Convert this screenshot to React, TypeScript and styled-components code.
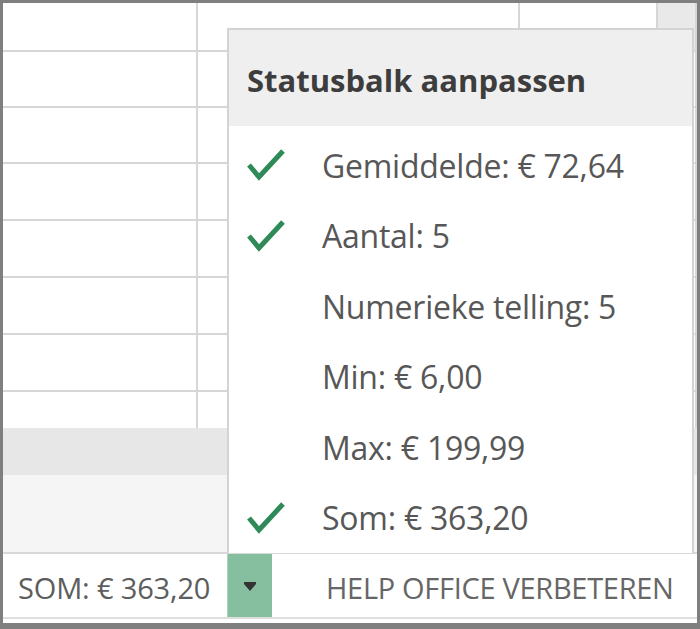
import React from 'react';
import styled, { createGlobalStyle } from 'styled-components';

const GlobalStyle = createGlobalStyle`
  html, body {
    margin: 0;
    padding: 0;
    background: #ffffff;
  }
  * {
    box-sizing: border-box;
  }
`;

const Frame = styled.div`
  position: relative;
  width: 700px;
  height: 629px;
  display: flex;
  flex-direction: column;
  border: 3px solid #7f7f7f;
  border-bottom-width: 6px;
  background: #ffffff;
  font-family: "Open Sans", "Noto Sans", sans-serif;
  overflow: hidden;
`;

const Sheet = styled.div`
  flex: 1;
  display: flex;
  flex-direction: column;
`;

const Grid = styled.div`
  display: flex;
  flex-direction: column;
`;

const Row = styled.div<{ $h: number; $last?: boolean }>`
  display: flex;
  height: ${p => p.$h}px;
  border-bottom: ${p => (p.$last ? 'none' : '2px solid #d6d6d6')};
`;

const Cell = styled.div<{ $w: number; $tone?: string }>`
  width: ${p => p.$w}px;
  flex: ${p => (p.$w ? '0 0 auto' : '1')};
  background: ${p => p.$tone || '#ffffff'};
  border-right: 2px solid #d6d6d6;
`;

const Band = styled.div`
  height: 47px;
  background: #e7e7e7;
`;

const Lower = styled.div`
  flex: 1;
  background: #f5f5f5;
`;

const StatusBar = styled.div`
  height: 67px;
  display: flex;
  align-items: stretch;
  border-top: 2px solid #d8d8d8;
  border-bottom: 2px solid #dedede;
  margin-bottom: 4px;
  background: #ffffff;
`;

const StatusText = styled.div<{ $w: number }>`
  width: ${p => p.$w}px;
  display: flex;
  align-items: center;
  padding-left: 15px;
  padding-top: 4px;
  font-size: 29px;
  color: #5d5d5d;
  letter-spacing: -0.15px;
  white-space: nowrap;
`;

const DropButton = styled.div`
  width: 45px;
  display: flex;
  align-items: center;
  justify-content: center;
  padding-top: 2px;
  background: #86bf9f;
  border-left: 1px solid #a9d3ba;
`;

const HelpText = styled.div`
  flex: 1;
  display: flex;
  align-items: center;
  padding-left: 54px;
  padding-top: 4px;
  font-size: 29px;
  color: #666666;
  letter-spacing: -0.3px;
  white-space: nowrap;
`;

const Menu = styled.div`
  position: absolute;
  left: 224px;
  top: 25px;
  width: 467px;
  height: 525px;
  background: #ffffff;
  border: 2px solid #d3d3d3;
  border-bottom: none;
  display: flex;
  flex-direction: column;
`;

const MenuHeader = styled.div`
  height: 97px;
  display: flex;
  align-items: center;
  padding-left: 18px;
  padding-top: 4px;
  background: #efefef;
  font-size: 31px;
  font-weight: 700;
  color: #3d3d3d;
  letter-spacing: 0;
  white-space: nowrap;
`;

const MenuBody = styled.div`
  padding-top: 4px;
  display: flex;
  flex-direction: column;
`;

const Item = styled.div`
  height: 70.5px;
  display: flex;
  align-items: center;
  padding-left: 17px;
`;

const CheckSlot = styled.div`
  width: 76px;
  height: 40px;
  display: flex;
  align-items: center;
`;

const ItemLabel = styled.span`
  font-size: 32px;
  color: #575757;
  letter-spacing: -0.25px;
  white-space: nowrap;
`;

const Check = () => (
  <svg width="40" height="34" viewBox="0 0 40 34">
    <path
      d="M3 17 L13 29 L37 3"
      fill="none"
      stroke="#2e8b57"
      strokeWidth="5"
      strokeLinecap="butt"
      strokeLinejoin="miter"
    />
  </svg>
);

const Caret = () => (
  <svg width="14" height="10" viewBox="0 0 14 10">
    <rect x="1" y="0" width="12" height="2" fill="#333" />
    <polygon points="1,2 13,2 7,9" fill="#333" />
  </svg>
);

const items = [
  { label: 'Gemiddelde: € 72,64', checked: true },
  { label: 'Aantal: 5', checked: true },
  { label: 'Numerieke telling: 5', checked: false },
  { label: 'Min: € 6,00', checked: false },
  { label: 'Max: € 199,99', checked: false },
  { label: 'Som: € 363,20', checked: true },
];

const rowHeights = [49, 56, 56, 57, 57, 57, 57, 36];

export default function App() {
  return (
    <>
      <GlobalStyle />
      <Frame>
        <Sheet>
          <Grid>
            {rowHeights.map((h, i) => (
              <Row key={i} $h={h} $last={i === rowHeights.length - 1}>
                <Cell $w={195} />
                <Cell $w={322} />
                <Cell $w={138} />
                <Cell $w={0} $tone={i === 0 ? '#e9e9e9' : '#ffffff'} />
              </Row>
            ))}
          </Grid>
          <Band />
          <Lower />
        </Sheet>
        <StatusBar>
          <StatusText $w={224}>SOM: € 363,20</StatusText>
          <DropButton>
            <Caret />
          </DropButton>
          <HelpText>HELP OFFICE VERBETEREN</HelpText>
        </StatusBar>
        <Menu>
          <MenuHeader>Statusbalk aanpassen</MenuHeader>
          <MenuBody>
            {items.map(it => (
              <Item key={it.label}>
                <CheckSlot>{it.checked && <Check />}</CheckSlot>
                <ItemLabel>{it.label}</ItemLabel>
              </Item>
            ))}
          </MenuBody>
        </Menu>
      </Frame>
    </>
  );
}
